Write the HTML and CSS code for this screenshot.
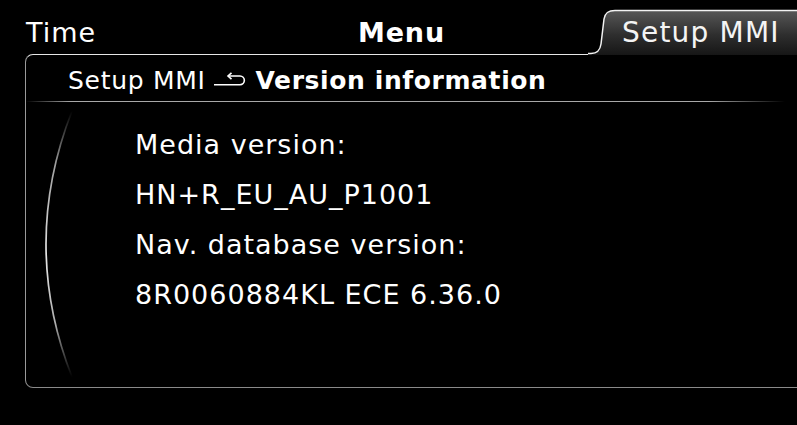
FILE: index.html
```html
<!DOCTYPE html>
<html lang="en">
<head>
    <meta charset="UTF-8">
    <meta name="viewport" content="width=device-width, initial-scale=1.0">
    <title>Setup MMI - Version information</title>
    <link rel="stylesheet" href="styles.css">
</head>
<body>
    <div class="screen">
        <div class="topbar">
            <div class="top-item time">Time</div>
            <div class="top-item menu">Menu</div>
            <div class="tab">
                <svg class="tab-shape" width="209" height="47" viewBox="0 0 209 47">
                    <defs>
                        <linearGradient id="tabFill" x1="0" y1="0" x2="0" y2="1">
                            <stop offset="0" stop-color="#575757"/>
                            <stop offset="0.55" stop-color="#2e2e2e"/>
                            <stop offset="1" stop-color="#161616"/>
                        </linearGradient>
                    </defs>
                    <path d="M0 47 V45.5 H3 C9 45.5 12 43 13 36 L16 11 C17 5 20 2.5 27 2.5 H209 V47 Z" fill="url(#tabFill)"/>
                    <path d="M0 45.5 H3 C9 45.5 12 43 13 36 L16 11 C17 5 20 2.5 27 2.5 H209" fill="none" stroke="#f2f2f2" stroke-width="1.5"/>
                </svg>
                <span class="tab-label">Setup MMI</span>
            </div>
        </div>

        <div class="panel">
            <div class="panel-header">
                <span class="crumb">Setup MMI</span>
                <svg class="back-icon" width="34" height="15" viewBox="0 0 34 15">
                    <path d="M2 12.7 H28 A4.35 4.35 0 0 0 28 4 H16" fill="none" stroke="#fff" stroke-width="1.6"/>
                    <path d="M19.5 0.8 L16 4 L19.5 7.2" fill="none" stroke="#fff" stroke-width="1.6"/>
                </svg>
                <span class="title">Version information</span>
            </div>
            <div class="separator"></div>
            <div class="panel-body">
                <svg class="arc" width="109" height="283" viewBox="0 0 109 283">
                    <defs>
                        <linearGradient id="arcFade" x1="0" y1="0" x2="0" y2="1">
                            <stop offset="0" stop-color="#bbb" stop-opacity="0"/>
                            <stop offset="0.2" stop-color="#c8c8c8" stop-opacity="0.8"/>
                            <stop offset="0.55" stop-color="#e6e6e6" stop-opacity="1"/>
                            <stop offset="0.8" stop-color="#cccccc" stop-opacity="0.85"/>
                            <stop offset="1" stop-color="#bbb" stop-opacity="0"/>
                        </linearGradient>
                    </defs>
                    <path d="M46 9 Q-6 142 46 275" fill="none" stroke="url(#arcFade)" stroke-width="1.7"/>
                </svg>
                <ul class="info-list">
                    <li>Media version:</li>
                    <li>HN+R_EU_AU_P1001</li>
                    <li>Nav. database version:</li>
                    <li>8R0060884KL ECE 6.36.0</li>
                </ul>
            </div>
        </div>
    </div>
</body>
</html>
```

FILE: styles.css
```css
body {
    margin: 0;
    background-color: #000;
    color: #fff;
    font-family: "DejaVu Sans", sans-serif;
}
.screen {
    width: 797px;
    height: 425px;
    overflow: hidden;
}
.topbar {
    height: 54px;
    display: grid;
    grid-template-columns: 1fr auto 1fr;
    align-items: start;
}
.top-item {
    font-size: 27px;
    line-height: 27px;
    padding-top: 19px;
}
.time {
    padding-left: 26px;
    letter-spacing: 1px;
}
.menu {
    font-weight: bold;
    padding-left: 6px;
    letter-spacing: 0.8px;
}
.tab {
    justify-self: end;
    position: relative;
    z-index: 1;
    width: 209px;
    height: 47px;
    margin-top: 8px;
}
.tab-shape {
    position: absolute;
    left: 0;
    top: 0;
}
.tab-label {
    position: relative;
    display: block;
    padding: 11px 0 0 34px;
    font-size: 28px;
    line-height: 28px;
    letter-spacing: 1.2px;
    color: #f4f4f4;
}
.panel {
    margin-left: 25px;
    height: 332px;
    border-top: 1.5px solid #e6e6e6;
    border-left: 1px solid #9a9a9a;
    border-bottom: 1.5px solid #8a8a8a;
    border-radius: 8px 0 0 8px;
}
.panel-header {
    display: flex;
    align-items: flex-start;
    height: 46px;
    padding-left: 42px;
    box-sizing: border-box;
    padding-top: 13px;
    font-size: 25px;
    line-height: 25px;
    letter-spacing: 0.7px;
}
.back-icon {
    margin: 4px 10px 0 6px;
}
.title {
    font-weight: bold;
    letter-spacing: 0.6px;
}
.separator {
    height: 1px;
    margin-right: 12px;
    background: linear-gradient(to right, rgba(170, 170, 170, 0) 0, #a8a8a8 45px, #a8a8a8 90%, rgba(170, 170, 170, 0) 100%);
}
.panel-body {
    display: flex;
}
.info-list {
    list-style: none;
    margin: 0;
    padding: 18px 0 0 0;
    font-size: 27px;
    line-height: 50px;
    letter-spacing: 1px;
}
```
